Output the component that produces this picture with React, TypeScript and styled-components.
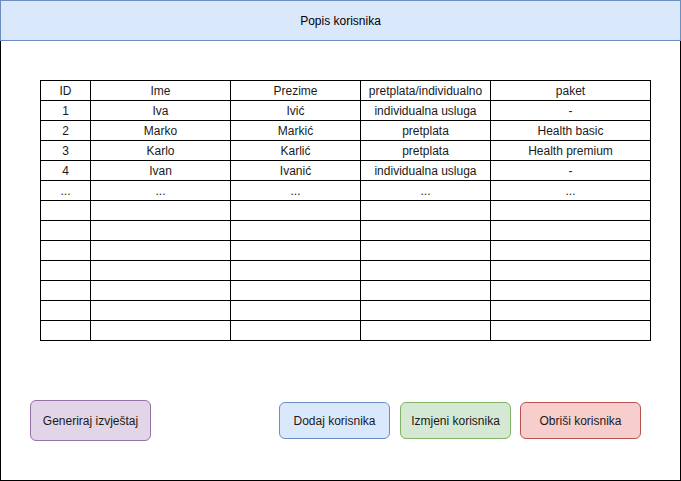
import React from "react";
import styled, { createGlobalStyle } from "styled-components";

const Global = createGlobalStyle`
  html, body { margin: 0; padding: 0; background: #ffffff; }
  body { font-family: "Liberation Sans", Arial, sans-serif; font-size: 12px; color: #000; }
`;

const Frame = styled.div`
  width: 681px;
  height: 481px;
  box-sizing: border-box;
  display: flex;
  flex-direction: column;
`;

const Header = styled.header`
  height: 41px;
  box-sizing: border-box;
  border: 1px solid #6c8ebf;
  background: #dae8fc;
  display: flex;
  align-items: center;
  justify-content: center;
  font-size: 12px;
`;

const Content = styled.main`
  flex: 1;
  box-sizing: border-box;
  border: 1px solid #000;
  border-top: none;
  padding: 39px 0 0 39px;
  display: flex;
  flex-direction: column;
`;

const Grid = styled.div`
  display: grid;
  grid-template-columns: 50px 140px 130px 130px 160px;
  grid-auto-rows: 20px;
  width: 611px;
  box-sizing: border-box;
  border-left: 1px solid #000;
  border-top: 1px solid #000;
`;

const Cell = styled.div`
  box-sizing: border-box;
  border-right: 1px solid #000;
  border-bottom: 1px solid #000;
  display: flex;
  align-items: center;
  justify-content: center;
  font-size: 12px;
  line-height: 1;
  white-space: nowrap;
  color: #1a1a1a;
`;

const ButtonRow = styled.div`
  display: flex;
  align-items: center;
  height: 41px;
  margin-top: 59px;
  margin-left: -10px;
`;

type Tone = "purple" | "blue" | "green" | "red";

const tones: Record<Tone, { bg: string; border: string }> = {
  purple: { bg: "#e1d5e7", border: "#9673a6" },
  blue: { bg: "#dae8fc", border: "#6c8ebf" },
  green: { bg: "#d5e8d4", border: "#82b366" },
  red: { bg: "#f8cecc", border: "#b85450" },
};

const Btn = styled.button<{ $tone: Tone; $w: number; $h: number; $ml: number }>`
  box-sizing: border-box;
  width: ${(p) => p.$w}px;
  height: ${(p) => p.$h}px;
  margin-left: ${(p) => p.$ml}px;
  background: ${(p) => tones[p.$tone].bg};
  border: 1px solid ${(p) => tones[p.$tone].border};
  border-radius: 6px;
  font-family: "Liberation Sans", Arial, sans-serif;
  font-size: 12px;
  color: #1a1a1a;
  padding: 0;
  display: flex;
  align-items: center;
  justify-content: center;
  cursor: pointer;
`;

const headers = ["ID", "Ime", "Prezime", "pretplata/individualno", "paket"];
const rows: string[][] = [
  ["1", "Iva", "Ivić", "individualna usluga", "-"],
  ["2", "Marko", "Markić", "pretplata", "Health basic"],
  ["3", "Karlo", "Karlić", "pretplata", "Health premium"],
  ["4", "Ivan", "Ivanić", "individualna usluga", "-"],
  ["...", "...", "...", "...", "..."],
];
const emptyRows = 7;

export default function App() {
  const all = [
    headers,
    ...rows,
    ...Array.from({ length: emptyRows }, () => ["", "", "", "", ""]),
  ];
  return (
    <>
      <Global />
      <Frame>
        <Header>Popis korisnika</Header>
        <Content>
          <Grid>
            {all.map((r, i) =>
              r.map((c, j) => <Cell key={`${i}-${j}`}>{c}</Cell>)
            )}
          </Grid>
          <ButtonRow>
            <Btn $tone="purple" $w={121} $h={41} $ml={0}>Generiraj izvještaj</Btn>
            <Btn $tone="blue" $w={111} $h={37} $ml={128}>Dodaj korisnika</Btn>
            <Btn $tone="green" $w={111} $h={37} $ml={10}>Izmjeni korisnika</Btn>
            <Btn $tone="red" $w={121} $h={37} $ml={9}>Obriši korisnika</Btn>
          </ButtonRow>
        </Content>
      </Frame>
    </>
  );
}
